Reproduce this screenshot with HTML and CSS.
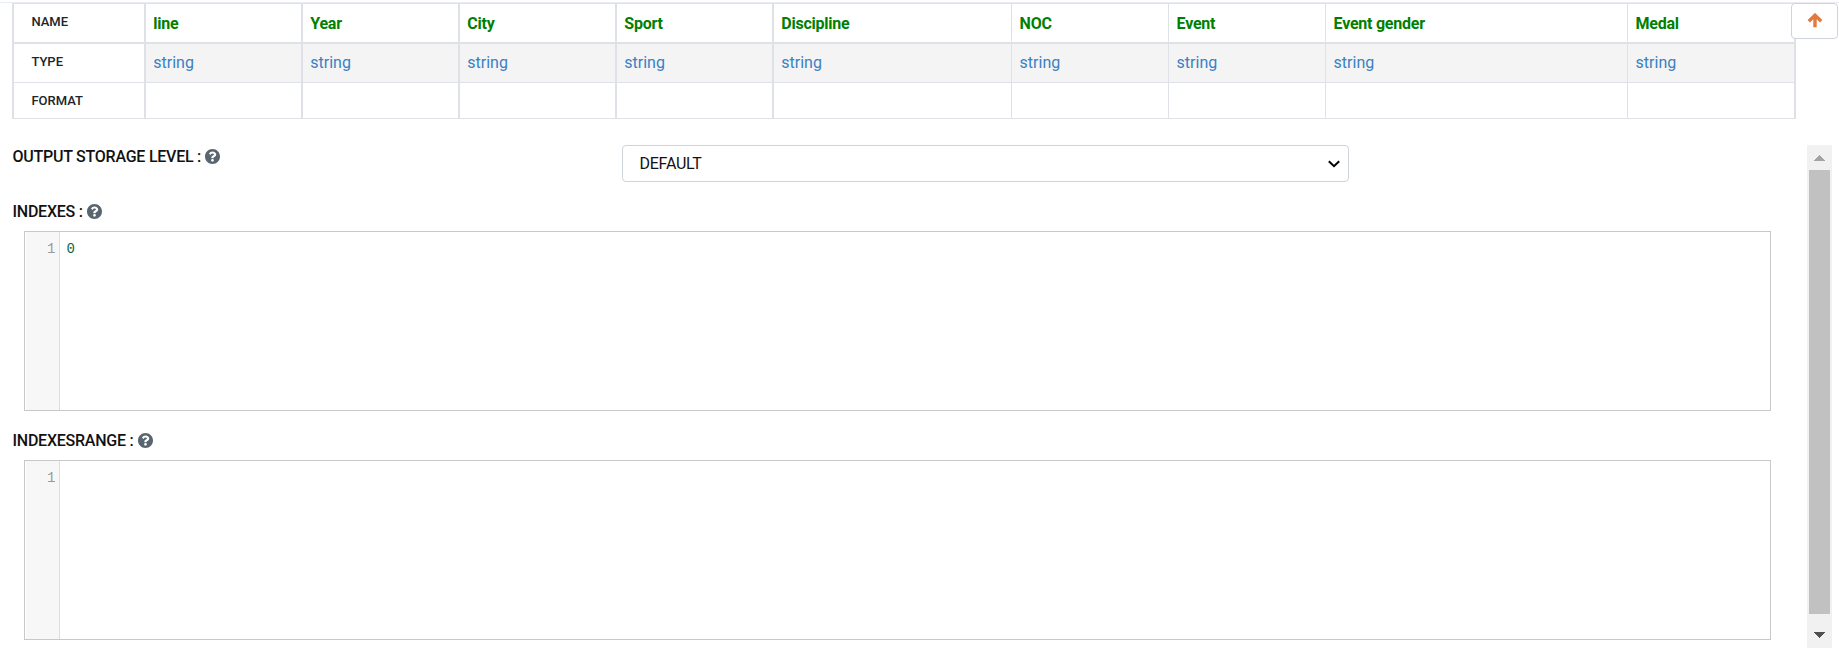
FILE: index.html
```html
<!DOCTYPE html>
<html lang="en">
<head>
<meta charset="utf-8">
<title>Schema</title>
<link rel="stylesheet" href="styles.css">
</head>
<body>
<svg class="defs" aria-hidden="true">
  <symbol id="help" viewBox="8 8 496 496"><path d="M504 256c0 137-111 248-248 248S8 393 8 256C8 119.100 119 8 256 8s248 111.100 248 248zM262.700 90c-54.500 0-89.300 23-116.500 63.800-3.500 5.300-2.400 12.400 2.700 16.300l34.700 26.300c5.200 3.900 12.600 3 16.700-2.100 17.900-22.700 30.100-35.800 57.300-35.800 20.400 0 45.700 13.100 45.700 33 0 15-12.400 22.700-32.500 34C247.100 238.500 216 254.900 216 296v4c0 6.600 5.400 12 12 12h56c6.600 0 12-5.400 12-12v-1.300c0-28.500 83.200-29.600 83.200-106.700 0-58-60.200-102-116.500-102zM256 338c-25.400 0-46 20.600-46 46s20.600 46 46 46 46-20.600 46-46-20.600-46-46-46z"/></symbol>
</svg>
<div class="topline"></div>
<section class="schema">
  <div class="row names">
    <div class="cell label">NAME</div><div class="cell">line</div><div class="cell">Year</div><div class="cell">City</div><div class="cell">Sport</div><div class="cell">Discipline</div><div class="cell thin">NOC</div><div class="cell thin">Event</div><div class="cell thin">Event gender</div><div class="cell thin">Medal</div>
  </div>
  <div class="row types">
    <div class="cell label">TYPE</div><div class="cell">string</div><div class="cell">string</div><div class="cell">string</div><div class="cell">string</div><div class="cell">string</div><div class="cell thin">string</div><div class="cell thin">string</div><div class="cell thin">string</div><div class="cell thin">string</div>
  </div>
  <div class="row formats">
    <div class="cell label">FORMAT</div><div class="cell"></div><div class="cell"></div><div class="cell"></div><div class="cell"></div><div class="cell"></div><div class="cell thin"></div><div class="cell thin"></div><div class="cell thin"></div><div class="cell thin"></div>
  </div>
</section>
<button class="collapse" aria-label="Collapse"><svg viewBox="0 0 16 15"><path d="M8 14.200V3M1.800 8.200l6.200-6 6.200 6"/></svg></button>
<main class="panel">
  <form class="fields">
    <div class="storage">
      <div class="title"><span>OUTPUT STORAGE LEVEL :</span><svg><use href="#help"/></svg></div>
      <div class="select"><span>DEFAULT</span><svg viewBox="0 0 12 8"><path d="M.8 1.200 6 6.200l5.200-5"/></svg></div>
    </div>
    <div class="title"><span>INDEXES :</span><svg><use href="#help"/></svg></div>
    <div class="editor"><div class="gutter">1</div><div class="code">0</div></div>
    <div class="title second"><span>INDEXESRANGE :</span><svg><use href="#help"/></svg></div>
    <div class="editor"><div class="gutter">1</div><div class="code"></div></div>
  </form>
  <div class="scrollbar">
    <svg class="up" viewBox="0 0 11 6" shape-rendering="crispEdges"><path d="M5.500 0 11 6H0z"/></svg>
    <div class="thumb"></div>
    <svg class="down" viewBox="0 0 11 6" shape-rendering="crispEdges"><path d="M0 0h11L5.500 6z"/></svg>
  </div>
</main>
</body>
</html>
```
FILE: styles.css
```css
* { box-sizing: border-box; }
body { margin: 0; padding-top: 2px; height: 656px; overflow: hidden; background: #fff; color: #111; font: 16px/20px Roboto, sans-serif; }
.defs { position: absolute; width: 0; height: 0; }
.topline { height: 1px; background: #e9ecf2; }
.schema { width: 1784px; margin-left: 12px; border-top: 1px solid #dee2e6; border-right: 2px solid #dee2e6; }
.row { display: grid; grid-template-columns: 132px 157px 157px 157px 157px 239px 157px 157px 302px 167px; border-bottom: 1px solid #dee2e6; }
.cell { border-left: 2px solid #dee2e6; padding: 9px 0 0 7.300px; white-space: nowrap; }
.cell.thin { border-left-width: 1px; padding-left: 7.600px; }
.names { height: 40px; border-bottom-width: 2px; color: green; font-weight: 700; letter-spacing: -0.240px; }
.names .cell { padding-top: 10px; }
.types { height: 39px; color: #3a80c4; }
.types .cell:not(.label) { background: #f4f4f4; }
.formats { height: 36px; }
.row .cell.label { padding: 8px 0 0 17.400px; font-size: 13px; font-weight: 500; letter-spacing: 0; color: #212529; }
.collapse { position: absolute; left: 1791px; top: 3px; width: 47px; height: 36px; padding: 0 0 2px; border: 1px solid #ced4da; border-radius: 4px; background: #fff; display: flex; align-items: center; justify-content: center; }
.collapse svg { width: 16px; height: 15px; fill: none; stroke: #e27a3f; stroke-width: 3.400; }
.panel { display: flex; margin-top: 26px; }
.fields { width: 1807px; padding-left: 12.500px; }
.storage { display: grid; grid-template-columns: 609.500px 727px; height: 55px; }
.title { display: flex; align-items: flex-start; gap: 4px; height: 31px; font-weight: 500; line-height: 23px; letter-spacing: -0.240px; }
.title svg { width: 15px; height: 15px; margin-top: 3.500px; fill: #5a6570; }
.title.second { margin-top: 18px; }
.select { display: flex; align-items: center; justify-content: space-between; height: 37px; padding: 0 8px 0 16.500px; border: 1px solid #ced4da; border-radius: 4px; letter-spacing: -0.240px; }
.select svg { width: 12px; height: 8px; fill: none; stroke: #000; stroke-width: 2; }
.editor { display: flex; width: 1747px; height: 180px; margin-left: 11.500px; border: 1px solid #c8c8c8; padding-left: 1px; font: 14px/18px "Liberation Mono", monospace; }
.gutter { width: 34px; padding: 8px 3.500px 0 0; background: #f7f7f7; border-right: 1px solid #ddd; color: #999; text-align: right; }
.code { padding: 8px 0 0 6.500px; color: #164; }
.scrollbar { display: flex; flex-direction: column; align-items: center; width: 25px; height: 503px; background: #f1f1f1; padding: 10px 0; }
.scrollbar svg { width: 11px; height: 6px; flex: none; }
.up { fill: #a3a3a3; }
.down { fill: #505050; margin-top: 18px; }
.thumb { width: 21px; height: 444px; margin-top: 9px; background: #c1c1c1; }
```
